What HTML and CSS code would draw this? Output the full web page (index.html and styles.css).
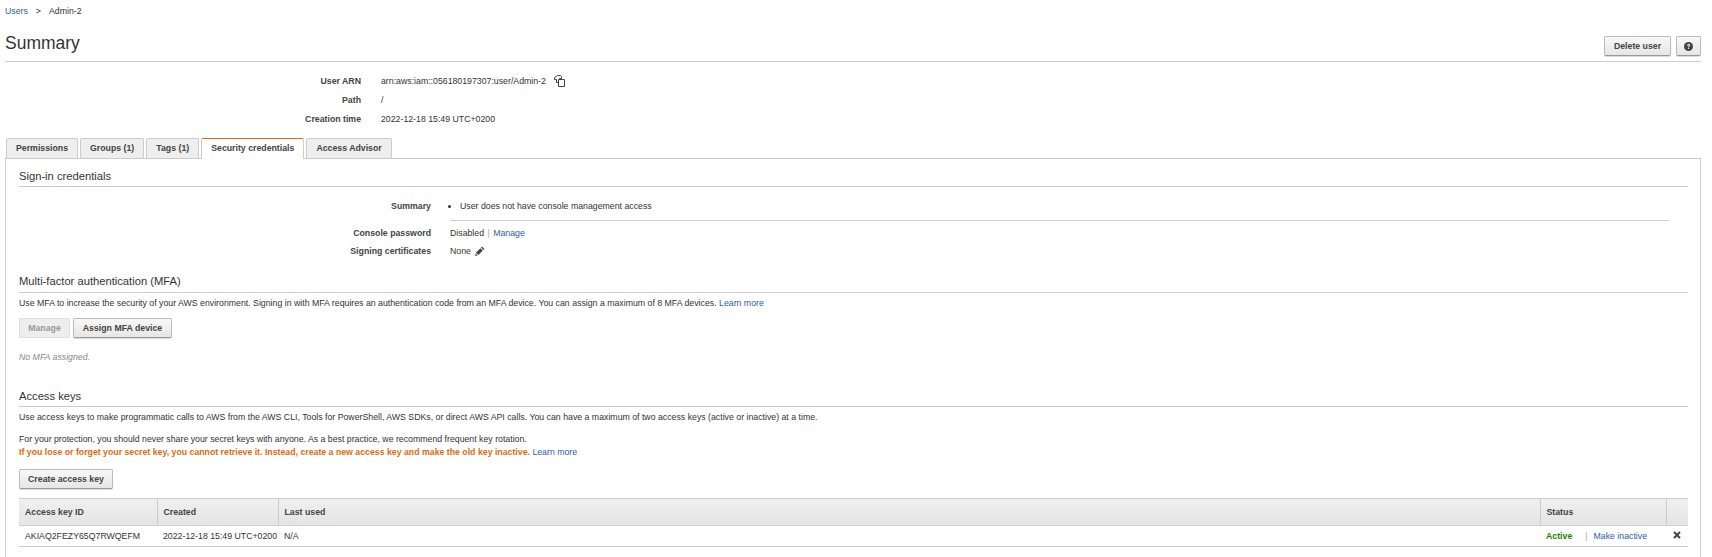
FILE: index.html
```html
<!DOCTYPE html>
<html lang="en">
<head>
  <meta charset="UTF-8">
  <title>Admin-2</title>
  <link rel="stylesheet" href="styles.css">
</head>
<body>
  <div class="breadcrumb"><a href="#">Users</a><span class="crumb-sep">&gt;</span><span>Admin-2</span></div>

  <div class="page-head">
    <h1>Summary</h1>
    <div class="head-actions">
      <button class="btn delete-btn">Delete user</button>
      <button class="btn help-btn" aria-label="Help">
        <svg width="9" height="9" viewBox="0 0 10 10"><circle cx="5" cy="5" r="5" fill="#444"/><path d="M3.3 3.9c0-1 .8-1.6 1.8-1.6s1.7.6 1.7 1.4c0 1.2-1.3 1.2-1.3 2.2H4.4c0-1.5 1.1-1.5 1.1-2.2 0-.3-.2-.5-.5-.5s-.6.2-.6.7zM4.4 6.5h1.1v1.2H4.4z" fill="#eee"/></svg>
      </button>
    </div>
  </div>

  <dl class="user-info">
    <dt>User ARN</dt>
    <dd>arn:aws:iam::056180197307:user/Admin-2
      <svg class="copy-icon" width="13" height="13" viewBox="0 0 13 13" fill="#fff" stroke="#444"><path d="M4.5 1.5h3l1 1v2h-2v4h-3v-3h-2v-2z"/><path d="M5.5 5.5h6v7h-6z"/></svg>
    </dd>
    <dt>Path</dt>
    <dd>/</dd>
    <dt>Creation time</dt>
    <dd>2022-12-18 15:49 UTC+0200</dd>
  </dl>

  <ul class="tabs">
    <li>Permissions</li>
    <li>Groups (1)</li>
    <li>Tags (1)</li>
    <li class="active">Security credentials</li>
    <li>Access Advisor</li>
  </ul>

  <div class="panel">
    <h2>Sign-in credentials</h2>
    <dl class="cred-info">
      <dt>Summary</dt>
      <dd class="cred-summary"><span class="bullet"></span>User does not have console management access</dd>
      <dt>Console password</dt>
      <dd>Disabled <span class="pipe">|</span> <a href="#">Manage</a></dd>
      <dt>Signing certificates</dt>
      <dd>None
        <svg class="pencil-icon" width="10" height="10" viewBox="0 0 10 10"><path d="M7 .6l2.4 2.4-1 1L6 1.6zM5.4 2.2l2.4 2.4-4.4 4.4-2.4-2.4zM.7 7.3l2 2-2.5.6z" fill="#444"/></svg>
      </dd>
    </dl>

    <h2 class="mfa-title">Multi-factor authentication (MFA)</h2>
    <p class="desc">Use MFA to increase the security of your AWS environment. Signing in with MFA requires an authentication code from an MFA device. You can assign a maximum of 8 MFA devices. <a href="#">Learn more</a></p>
    <div class="btn-row">
      <button class="btn disabled">Manage</button>
      <button class="btn strong">Assign MFA device</button>
    </div>
    <p class="no-mfa">No MFA assigned.</p>

    <h2 class="keys-title">Access keys</h2>
    <p class="desc">Use access keys to make programmatic calls to AWS from the AWS CLI, Tools for PowerShell, AWS SDKs, or direct AWS API calls. You can have a maximum of two access keys (active or inactive) at a time.</p>
    <p class="desc protect">For your protection, you should never share your secret keys with anyone. As a best practice, we recommend frequent key rotation.<br>
      <span class="warn">If you lose or forget your secret key, you cannot retrieve it. Instead, create a new access key and make the old key inactive.</span> <a href="#">Learn more</a></p>
    <button class="btn create-btn">Create access key</button>

    <table class="keys-table">
      <thead>
        <tr>
          <th class="col-id">Access key ID</th>
          <th class="col-created">Created</th>
          <th>Last used</th>
          <th class="col-status">Status</th>
          <th class="col-del"></th>
        </tr>
      </thead>
      <tbody>
        <tr>
          <td>AKIAQ2FEZY65Q7RWQEFM</td>
          <td>2022-12-18 15:49 UTC+0200</td>
          <td>N/A</td>
          <td><span class="active-label">Active</span><span class="pipe status-pipe">|</span><a href="#">Make inactive</a></td>
          <td class="del-cell"><svg width="8" height="8" viewBox="0 0 8 8"><path d="M1 1l6 6M7 1L1 7" stroke="#444" stroke-width="2"/></svg></td>
        </tr>
      </tbody>
    </table>
  </div>
</body>
</html>
```

FILE: styles.css
```css
* {
  margin: 0;
  padding: 0;
  box-sizing: border-box;
}

html, body {
  height: 557px;
  overflow: hidden;
}

body {
  font-family: 'Liberation Sans', Arial, sans-serif;
  font-size: 8.75px;
  color: #333;
  background-color: #fff;
  padding: 5px 11px 0 5px;
}

a {
  color: #2a5ea8;
  text-decoration: none;
}

.breadcrumb {
  height: 12px;
  line-height: 12px;
}

.crumb-sep {
  margin: 0 8px;
}

.page-head {
  display: flex;
  justify-content: space-between;
  align-items: flex-end;
  height: 45px;
  padding-bottom: 5px;
  border-bottom: 1px solid #ccc;
}

.page-head h1 {
  font-size: 17.5px;
  font-weight: 400;
  line-height: 20px;
  margin-bottom: 3px;
}

.head-actions {
  display: flex;
  gap: 5px;
}

.btn {
  font-family: inherit;
  font-size: 8.75px;
  font-weight: 700;
  color: #444;
  height: 20px;
  padding: 0 4px;
  border: 1px solid #bbb;
  border-bottom-color: #999;
  border-radius: 2px;
  background: linear-gradient(#f8f8f8, #e6e6e6);
  box-shadow: 0 1px 1px rgba(0, 0, 0, 0.15);
}

.delete-btn {
  width: 67px;
}

.help-btn {
  width: 25px;
  display: flex;
  align-items: center;
  justify-content: center;
}

.user-info {
  display: grid;
  grid-template-columns: 356px 1fr;
  column-gap: 20px;
  margin-top: 10px;
}

.user-info dt, .user-info dd {
  line-height: 19px;
}

.cred-info dt, .cred-info dd {
  line-height: 18.5px;
}

.user-info dt, .cred-info dt {
  font-weight: 700;
  color: #444;
  text-align: right;
}

.copy-icon {
  margin-left: 5px;
  vertical-align: -3px;
}

.tabs {
  display: flex;
  gap: 2px;
  list-style: none;
  margin-top: 9px;
  margin-left: 1px;
}

.tabs li {
  height: 20px;
  line-height: 19px;
  padding: 0 9px;
  font-weight: 700;
  color: #444;
  border: 1px solid #ccc;
  border-bottom: none;
  border-radius: 2px 2px 0 0;
  background-color: #eee;
}

.tabs li.active {
  background-color: #fff;
  border-top: 1px solid #dd6b10;
  position: relative;
  z-index: 1;
  height: 21px;
  margin-bottom: -1px;
}

.panel {
  height: 420px;
  padding: 9px 12px 0 13px;
  border: 1px solid #ccc;
}

.panel h2 {
  font-size: 11.2px;
  font-weight: 400;
  line-height: 16px;
  padding-bottom: 2px;
  border-bottom: 1px solid #ccc;
}

.cred-info {
  display: grid;
  grid-template-columns: 412px 1fr;
  column-gap: 19px;
  margin-top: 10px;
}

.cred-summary {
  padding-bottom: 4px;
  margin-bottom: 3px;
  margin-right: 19px;
  border-bottom: 1px solid #ccc;
  display: flex;
  align-items: center;
}

.bullet {
  width: 3px;
  height: 3px;
  border-radius: 50%;
  background-color: #333;
  margin-left: -2px;
  margin-right: 9px;
}

.pipe {
  color: #aaa;
  margin: 0 1px;
}

.pencil-icon {
  margin-left: 2px;
  vertical-align: -2px;
}

.panel .mfa-title {
  margin-top: 12px;
  padding-bottom: 3px;
}

.desc {
  line-height: 14px;
  margin-top: 3px;
}

.btn-row {
  display: flex;
  gap: 3px;
  margin-top: 8px;
}

.btn.disabled {
  width: 51px;
  color: #999;
  border-color: #ddd;
  background: #eee;
  box-shadow: none;
}

.btn.strong {
  width: 99px;
}

.no-mfa {
  font-style: italic;
  color: #888;
  line-height: 14px;
  margin-top: 12px;
}

.keys-title {
  margin-top: 24px;
}

.protect {
  margin-top: 9px;
  line-height: 13px;
}

.warn {
  color: #dd6b10;
  font-weight: 700;
}

.create-btn {
  width: 94px;
  margin-top: 10px;
  display: block;
}

.keys-table {
  width: 100%;
  margin-top: 9px;
  border-collapse: collapse;
  table-layout: fixed;
}

.keys-table th {
  height: 27px;
  padding: 0 6px;
  text-align: left;
  font-weight: 700;
  color: #444;
  border: 1px solid #ccc;
  border-left: none;
  background: linear-gradient(#f0f0f0, #e4e4e4);
}

.keys-table th:last-child {
  border-right: none;
}

.keys-table td {
  height: 21px;
  padding: 0 6px;
  border-bottom: 1px solid #ccc;
  white-space: nowrap;
}

.col-id {
  width: 138px;
}

.col-created {
  width: 121px;
}

.col-status {
  width: 126px;
}

.col-del {
  width: 22px;
}

.active-label {
  color: #1d8102;
  font-weight: 700;
}

.status-pipe {
  margin: 0 6px 0 13px;
}

.del-cell {
  text-align: center;
}
```
